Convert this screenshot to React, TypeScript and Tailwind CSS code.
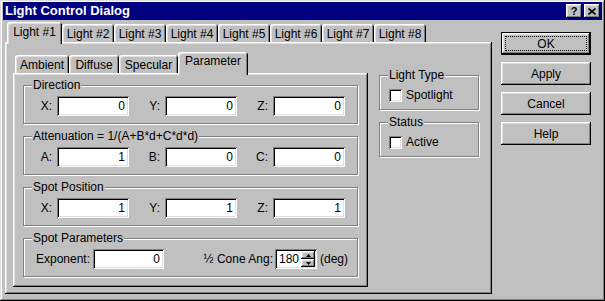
import React from 'react';

const raised =
  'shadow-[inset_-1px_-1px_0_#000,inset_1px_1px_0_#fff,inset_-2px_-2px_0_#808080,inset_2px_2px_0_#dfdfdf]';
const sunken =
  'bg-white shadow-[inset_1px_1px_0_#808080,inset_-1px_-1px_0_#fff,inset_2px_2px_0_#000,inset_-2px_-2px_0_#dfdfdf]';
const panel =
  'shadow-[inset_-1px_-1px_0_#000,inset_1px_1px_0_#fff,inset_-2px_-2px_0_#808080,inset_2px_2px_0_#dfdfdf]';
const tabEdge =
  'shadow-[inset_1px_1px_0_#fff,inset_-1px_0_0_#000,inset_2px_2px_0_#dfdfdf,inset_-2px_0_0_#808080]';

const Tab = ({ label, w, active, small }: { label: string; w: string; active?: boolean; small?: boolean }) =>
  active ? (
    <div
      className={`relative z-10 -mb-[2px] ${small ? 'h-[23px] pt-[2px]' : 'h-[22px] pt-[3px]'} ${w} flex justify-center rounded-t-[3px] bg-[#c0c0c0] ${tabEdge}`}
    >
      {label}
    </div>
  ) : (
    <div className={`h-[18px] pt-[3px] ${w} flex justify-center rounded-t-[3px] ${tabEdge}`}>
      {label}
    </div>
  );

const Field = ({ value, w }: { value: string; w: string }) => (
  <div className={`${w} h-[20px] flex items-center justify-end pr-[4px] ${sunken}`}>{value}</div>
);

const Group = ({ label, className, children }: { label: string; className: string; children?: React.ReactNode }) => (
  <div className={`relative border border-[#808080] shadow-[inset_1px_1px_0_#fff,1px_1px_0_#fff] ${className}`}>
    <span className="absolute -top-[8px] left-[8px] bg-[#c0c0c0] px-[1px] leading-[14px]">{label}</span>
    {children}
  </div>
);

const XYZRow = ({ labels, values }: { labels: string[]; values: string[] }) => (
  <div className="flex items-center pt-[10px]">
    {labels.map((l, i) => (
      <div key={l} className="flex items-center">
        <span className={`${i === 0 ? 'w-[33px]' : 'w-[36px]'} pr-[5px] text-right`}>{l}</span>
        <Field value={values[i]} w="w-[72px]" />
      </div>
    ))}
  </div>
);

const Check = ({ label }: { label: string }) => (
  <div className="flex items-center pt-[12px] pl-[9px]">
    <div className={`w-[13px] h-[13px] ${sunken}`} />
    <span className="ml-[4px]">{label}</span>
  </div>
);

const Button = ({ label, isDefault }: { label: string; isDefault?: boolean }) =>
  isDefault ? (
    <div className="relative w-[90px] h-[23px] border border-black">
      <div className={`w-full h-full flex items-center justify-center ${raised}`}>{label}</div>
      <div className="absolute inset-[3px] border border-dotted border-black" />
    </div>
  ) : (
    <div className={`w-[90px] h-[23px] flex items-center justify-center ${raised}`}>{label}</div>
  );

const Spin = () => (
  <div className="flex flex-col w-[14px] h-[16px]">
    <div className={`h-[8px] flex items-center justify-center ${raised} bg-[#c0c0c0]`}>
      <svg width="5" height="3" viewBox="0 0 5 3">
        <path d="M2.5 0 L5 3 L0 3 Z" fill="#000" />
      </svg>
    </div>
    <div className={`h-[8px] flex items-center justify-center ${raised} bg-[#c0c0c0]`}>
      <svg width="5" height="3" viewBox="0 0 5 3">
        <path d="M0 0 L5 0 L2.5 3 Z" fill="#000" />
      </svg>
    </div>
  </div>
);

export default function App() {
  return (
    <div
      className={`w-[605px] h-[301px] bg-[#c0c0c0] font-['Liberation_Sans',Arial,sans-serif] text-[12px] leading-[14px] text-black px-[3px] pt-[2px] flex flex-col shadow-[inset_-1px_-1px_0_#000,inset_1px_1px_0_#dfdfdf,inset_-2px_-2px_0_#808080,inset_2px_2px_0_#fff]`}
    >
      {/* title bar */}
      <div className="h-[18px] bg-[#000080] flex items-center pl-[2px] pr-[2px]">
        <span className="text-white font-bold text-[13px] flex-1">Light Control Dialog</span>
        <div className={`w-[16px] h-[14px] flex items-center justify-center font-bold text-[11px] leading-none bg-[#c0c0c0] ${raised}`}>
          ?
        </div>
        <div className={`ml-[2px] w-[16px] h-[14px] flex items-center justify-center bg-[#c0c0c0] ${raised}`}>
          <svg width="8" height="7" viewBox="0 0 8 7">
            <path d="M0.5 0.5 L7.5 6.5 M7.5 0.5 L0.5 6.5" stroke="#000" strokeWidth="1.6" />
          </svg>
        </div>
      </div>

      <div className="flex mt-[2px] pl-[2px]">
        {/* outer tab control */}
        <div className="w-[487px] flex flex-col">
          <div className="flex items-end h-[20px] pl-[2px]">
            <Tab label="Light #1" w="w-[55px]" active />
            {['Light #2', 'Light #3', 'Light #4', 'Light #5', 'Light #6', 'Light #7', 'Light #8'].map(t => (
              <Tab key={t} label={t} w="w-[52px]" />
            ))}
          </div>
          <div className={`h-[252px] flex items-start pl-[8px] pt-[10px] ${panel}`}>
            {/* inner tab control */}
            <div className="w-[355px] flex flex-col">
              <div className="flex items-end h-[21px] pl-[2px]">
                <Tab label="Ambient" w="w-[54px]" small />
                <Tab label="Diffuse" w="w-[50px]" small />
                <Tab label="Specular" w="w-[59px]" small />
                <Tab label="Parameter" w="w-[70px]" active small />
              </div>
              <div className={`h-[214px] flex flex-col gap-[12px] pt-[12px] px-[10px] ${panel}`}>
                <Group label="Direction" className="h-[39px]">
                  <XYZRow labels={['X:', 'Y:', 'Z:']} values={['0', '0', '0']} />
                </Group>
                <Group label="Attenuation = 1/(A+B*d+C*d*d)" className="h-[39px]">
                  <XYZRow labels={['A:', 'B:', 'C:']} values={['1', '0', '0']} />
                </Group>
                <Group label="Spot Position" className="h-[39px]">
                  <XYZRow labels={['X:', 'Y:', 'Z:']} values={['1', '1', '1']} />
                </Group>
                <Group label="Spot Parameters" className="h-[39px]">
                  <div className="flex items-center pt-[10px] pl-[12px]">
                    <span className="w-[57px]">Exponent:</span>
                    <Field value="0" w="w-[71px]" />
                    <span className="w-[111px] pr-[2px] text-right">½ Cone Ang:</span>
                    <div className={`w-[42px] h-[20px] flex items-center p-[2px] ${sunken}`}>
                      <span className="flex-1 text-right pr-[2px]">180</span>
                      <Spin />
                    </div>
                    <span className="ml-[3px]">(deg)</span>
                  </div>
                </Group>
              </div>
            </div>

            {/* right column */}
            <div className="ml-[11px] mt-[23px] flex flex-col gap-[12px]">
              <Group label="Light Type" className="w-[100px] h-[35px]">
                <Check label="Spotlight" />
              </Group>
              <Group label="Status" className="w-[100px] h-[35px]">
                <Check label="Active" />
              </Group>
            </div>
          </div>
        </div>

        {/* buttons */}
        <div className="ml-[9px] mt-[10px] flex flex-col gap-[7px]">
          <Button label="OK" isDefault />
          <Button label="Apply" />
          <Button label="Cancel" />
          <Button label="Help" />
        </div>
      </div>
    </div>
  );
}
